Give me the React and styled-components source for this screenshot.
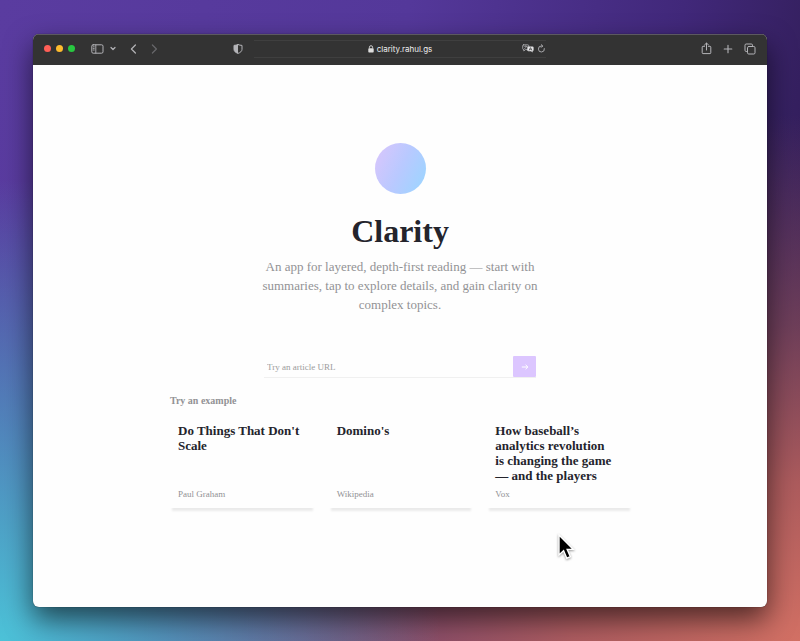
import React from 'react';
import styled, { createGlobalStyle } from 'styled-components';

const SERIF = "'Liberation Serif', 'Times New Roman', serif";
const SANS = "Inter, 'Liberation Sans', sans-serif";
const BLACK = '#24242c';
const GREY = '#929295';
const BAR = '#333333';
const LILAC = '#dcc6ff';

const GlobalStyle = createGlobalStyle`
  * {
    box-sizing: border-box;
  }

  body {
    margin: 0;
  }

  h1, h2, h3, p {
    margin: 0;
  }
`;

const Desktop = styled.div`
  min-height: 100vh;
  padding: 34px 33px;
  display: flex;
  position: relative;
  overflow: hidden;
  background:
    radial-gradient(ellipse 55% 72% at 0% 100%, #4cc2d8 0%, rgba(76, 180, 206, 0.85) 25%, rgba(76, 130, 180, 0) 100%),
    radial-gradient(ellipse 95% 82% at 100% 100%, #d27064 0%, rgba(186, 98, 94, 0.9) 30%, rgba(150, 84, 90, 0.6) 60%, rgba(80, 44, 80, 0) 100%),
    linear-gradient(100deg, #5a3ca0 0%, #54389a 45%, #41287a 75%, #2c1a4c 100%);
`;

const Window = styled.div`
  flex: 1;
  display: flex;
  flex-direction: column;
  border-radius: 6px;
  overflow: hidden;
  background: #fefefe;
  box-shadow: 0 0 1px rgba(0, 0, 0, 0.7), 0 12px 28px rgba(0, 0, 0, 0.6);
`;

const Toolbar = styled.header`
  height: 31px;
  padding-bottom: 3px;
  display: grid;
  grid-template-columns: 1fr minmax(0, 292px) 1fr;
  align-items: center;
  background: ${BAR};
  border-top: 1px solid #5c5960;
  font-family: ${SANS};
`;

const Side = styled.div`
  display: flex;
  align-items: center;
  justify-content: ${props => (props.$end ? 'flex-end' : 'flex-start')};
  gap: ${props => (props.$end ? '11px' : '0')};
  padding: 0 11px;
`;

const Lights = styled.div`
  display: flex;
  gap: 5px;
  margin-right: 16px;
`;

const Light = styled.button`
  width: 7px;
  height: 7px;
  padding: 0;
  border: 0;
  border-radius: 50%;
  background: ${props => props.$color};
`;

const ToolButton = styled.button`
  display: flex;
  padding: 0;
  border: 0;
  background: none;
  color: ${props => (props.$dim ? '#68686b' : '#b4b4b8')};
  margin-left: ${props => props.$space || '0'};

  svg {
    display: block;
    fill: none;
    stroke: currentColor;
    stroke-linecap: round;
    stroke-linejoin: round;
  }
`;

const Address = styled.div`
  height: 18px;
  display: grid;
  grid-template-columns: 1fr auto 1fr;
  align-items: center;
  border-top: 1px solid #3f3f3f;
  border-bottom: 1px solid #3f3f3f;
  color: #eeeeee;
  font-size: 8px;
`;

const Host = styled.div`
  grid-column: 2;
  display: flex;
  align-items: center;
  gap: 3px;
`;

const AddressActions = styled.div`
  display: flex;
  align-items: center;
  justify-content: flex-end;
  gap: 3px;
`;

const Page = styled.main`
  flex: 1;
  display: flex;
  flex-direction: column;
  align-items: center;
  padding: 78px 20px 40px;
  font-family: ${SERIF};
  color: ${BLACK};
`;

const Orb = styled.div`
  width: 51px;
  height: 51px;
  border-radius: 50%;
  background: linear-gradient(115deg, #d8c6fc 5%, #b9c9ff 50%, #9cd5ff 95%);
`;

const Title = styled.h1`
  margin-top: 18px;
  font-size: 32px;
  line-height: 38px;
  font-weight: 700;
`;

const Intro = styled.p`
  max-width: 294px;
  margin-top: 7px;
  font-size: 13px;
  line-height: 19px;
  text-align: center;
  color: ${GREY};
`;

const UrlForm = styled.form`
  width: 100%;
  max-width: 272px;
  height: 22px;
  margin-top: 42px;
  display: flex;
  border-bottom: 1px solid #f0f0f0;
`;

const UrlInput = styled.input`
  flex: 1;
  min-width: 0;
  padding: 0 3px;
  border: 0;
  outline: 0;
  background: none;
  font-family: ${SERIF};
  font-size: 9px;
  color: ${BLACK};

  &::placeholder {
    color: #9c9c9c;
    opacity: 1;
  }
`;

const GoButton = styled.button`
  width: 23px;
  padding: 0;
  border: 0;
  border-radius: 1px;
  display: flex;
  align-items: center;
  justify-content: center;
  background: ${LILAC};
  color: #ffffff;
`;

const Examples = styled.section`
  width: 100%;
  max-width: 464px;
  margin-top: 17px;
`;

const Label = styled.h2`
  padding: 0 2px;
  font-size: 10px;
  line-height: 12px;
  color: ${GREY};
`;

const Cards = styled.div`
  display: grid;
  grid-template-columns: repeat(3, 1fr);
  gap: 12px;
  margin-top: 8px;
`;

const Card = styled.a`
  min-height: 93px;
  padding: 8px 10px;
  display: flex;
  flex-direction: column;
  justify-content: space-between;
  color: inherit;
  text-decoration: none;
  border-radius: 2px;
  box-shadow: 1px 6px 2px -3px rgba(0, 0, 0, 0.08);
`;

const CardTitle = styled.h3`
  font-size: 13px;
  line-height: 15px;
`;

const Source = styled.p`
  font-size: 9px;
  line-height: 12px;
  color: ${GREY};
`;

const Pointer = styled.svg`
  position: absolute;
  left: 557px;
  top: 533px;
  filter: drop-shadow(0 1px 1px rgba(0, 0, 0, 0.4));
`;

const examples = [
  { title: "Do Things That Don't Scale", source: 'Paul Graham' },
  { title: "Domino's", source: 'Wikipedia' },
  { title: 'How baseball’s analytics revolution is\u00a0changing the game —\u00a0and the players', source: 'Vox' },
];

function BrowserBar() {
  return (
    <Toolbar>
      <Side>
        <Lights>
          <Light $color='#ff5f57' aria-label='Close' />
          <Light $color='#febc2e' aria-label='Minimize' />
          <Light $color='#28c840' aria-label='Zoom' />
        </Lights>
        <ToolButton aria-label='Sidebar'>
          <svg width='13' height='10' viewBox='0 0 13 10'>
            <rect x='0.8' y='0.8' width='11.2' height='8.4' rx='1.4' />
            <path d='M4.8 1v8M2.2 2.8h1M2.2 4.4h1M2.2 6h1' strokeWidth='0.9' />
          </svg>
        </ToolButton>
        <ToolButton $space='6px' aria-label='Tab groups'>
          <svg width='6' height='5' viewBox='0 0 6 5'>
            <path d='M1 1.5l2 2 2-2' strokeWidth='1.2' />
          </svg>
        </ToolButton>
        <ToolButton $space='14px' aria-label='Back'>
          <svg width='7' height='10' viewBox='0 0 7 10'>
            <path d='M5.4 1L1.4 5l4 4' strokeWidth='1.2' />
          </svg>
        </ToolButton>
        <ToolButton $space='14px' $dim aria-label='Forward'>
          <svg width='7' height='10' viewBox='0 0 7 10'>
            <path d='M1.4 1l4 4-4 4' strokeWidth='1.2' />
          </svg>
        </ToolButton>
        <ToolButton $space='auto' aria-label='Privacy report'>
          <svg width='10' height='10' viewBox='0 0 10 10'>
            <path d='M5 .6C3.8 1.1 2.4 1.3 1 1.4v4c0 1.8 1.7 3.2 4 4 2.3-.8 4-2.2 4-4v-4C7.6 1.3 6.2 1.1 5 .6z' />
            <path d='M5 .6C3.8 1.1 2.4 1.3 1 1.4v4c0 1.8 1.7 3.2 4 4z' fill='currentColor' stroke='none' />
          </svg>
        </ToolButton>
      </Side>
      <Address>
        <Host>
          <svg width='6' height='8' viewBox='0 0 6 8'>
            <rect x='0.3' y='3.2' width='5.4' height='4.3' rx='0.8' fill='#dddddd' />
            <path d='M1.4 3.4V2.3a1.6 1.6 0 0 1 3.2 0v1.1' fill='none' stroke='#dddddd' strokeWidth='0.9' />
          </svg>
          clarity.rahul.gs
        </Host>
        <AddressActions>
          <ToolButton aria-label='Translate'>
            <svg width='12' height='9' viewBox='0 0 12 9'>
              <path d='M1.6.8h4.2q1 0 1 1v2.8q0 1-1 1H3.4L1.8 7V5.6Q.7 5.6.7 4.6V1.8q0-1 .9-1z' strokeWidth='0.8' />
              <path d='M2.2 2.3h3M3.7 1.7v.6M4.9 2.3Q4.2 4 2.5 4.6' strokeWidth='0.6' />
              <path d='M6.4 2.4h4q1.2 0 1.2 1.2v2.5q0 1-1 1.1v1.3L9.1 7.3H6.4q-1.1 0-1.1-1.2V3.6q0-1.2 1.1-1.2z' fill='#e4e4e6' stroke='none' />
              <path d='M7.2 6.2l1.3-2.6 1.3 2.6M7.7 5.3h1.6' stroke='#333333' strokeWidth='0.6' />
            </svg>
          </ToolButton>
          <ToolButton aria-label='Reload'>
            <svg width='9' height='9' viewBox='0 0 9 9'>
              <path d='M7.4 4.6A3 3 0 1 1 4.4 2h1.2M4.3.7L5.7 2 4.3 3.4' strokeWidth='0.9' />
            </svg>
          </ToolButton>
        </AddressActions>
      </Address>
      <Side $end>
        <ToolButton aria-label='Share'>
          <svg width='11' height='13' viewBox='0 0 11 13'>
            <path d='M3.6 4.3H2q-.8 0-.8.8v5.7q0 .8.8.8h7q.8 0 .8-.8V5.1q0-.8-.8-.8H7.4M5.5 8V1.2M3.5 3l2-2 2 2' />
          </svg>
        </ToolButton>
        <ToolButton aria-label='New tab'>
          <svg width='10' height='10' viewBox='0 0 10 10'>
            <path d='M5 1.2v7.6M1.2 5h7.6' strokeWidth='1.1' />
          </svg>
        </ToolButton>
        <ToolButton aria-label='Tab overview'>
          <svg width='12' height='12' viewBox='0 0 12 12'>
            <path d='M3.5 8.5H2.2Q1 8.5 1 7.3V2.2Q1 1 2.2 1h5.1q1.2 0 1.2 1.2v1.3' />
            <rect x='3.5' y='3.5' width='7.5' height='7.5' rx='1.2' />
          </svg>
        </ToolButton>
      </Side>
    </Toolbar>
  );
}

export default function App() {
  return (
    <Desktop>
      <GlobalStyle />
      <Window>
        <BrowserBar />
        <Page>
          <Orb />
          <Title>Clarity</Title>
          <Intro>
            An app for layered, depth-first reading — start with summaries, tap to explore details, and gain clarity on
            complex topics.
          </Intro>
          <UrlForm onSubmit={e => e.preventDefault()}>
            <UrlInput type='text' placeholder='Try an article URL' aria-label='Article URL' />
            <GoButton type='submit' aria-label='Go'>
              <svg width='8' height='8' viewBox='0 0 8 8' fill='none' stroke='currentColor'>
                <path d='M0.8 4h6M4.6 1.8L6.9 4 4.6 6.2' />
              </svg>
            </GoButton>
          </UrlForm>
          <Examples>
            <Label>Try an example</Label>
            <Cards>
              {examples.map(item => (
                <Card href='#' key={item.title}>
                  <CardTitle>{item.title}</CardTitle>
                  <Source>{item.source}</Source>
                </Card>
              ))}
            </Cards>
          </Examples>
        </Page>
      </Window>
      <Pointer width='18' height='28' viewBox='0 0 18 28'>
        <path d='M2 2v20l4.6-4.2 3.2 7.4 3.6-1.6-3.2-7.2h6.2z' fill='#000000' stroke='#ffffff' strokeWidth='1.4' />
      </Pointer>
    </Desktop>
  );
}
